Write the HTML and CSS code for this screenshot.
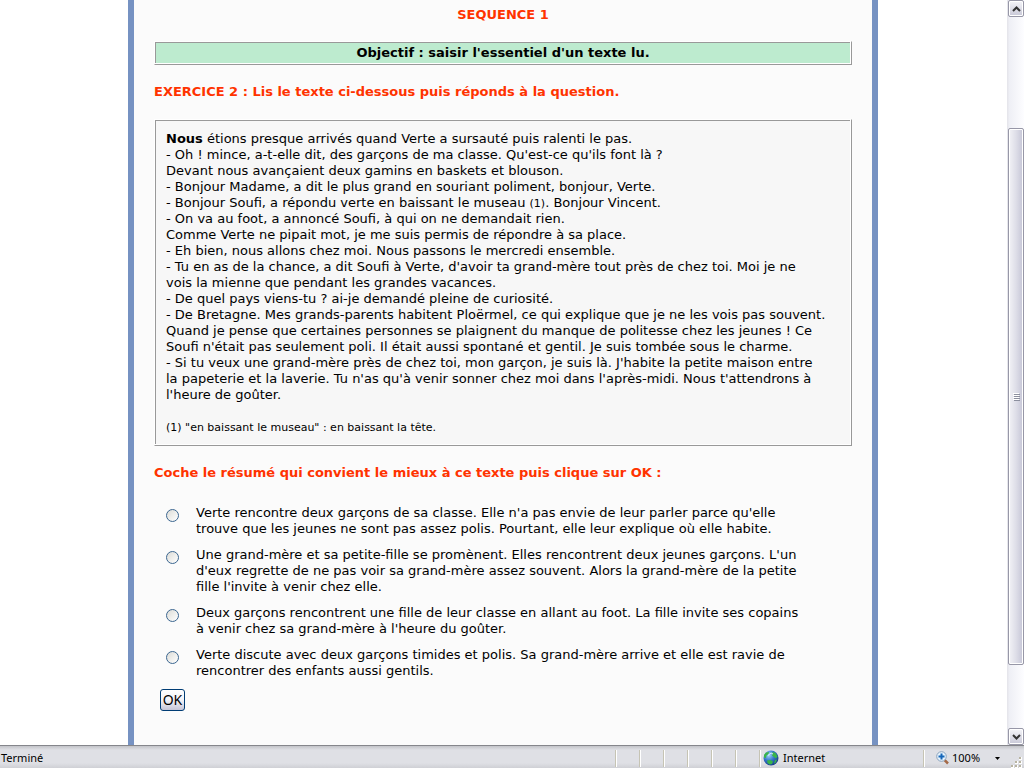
FILE: index.html
```html
<!DOCTYPE html>
<html lang="fr">
<head>
<meta charset="utf-8">
<title>Séquence 1</title>
<link rel="stylesheet" href="styles.css">
</head>
<body>
<div class="viewport">
  <div class="pane">
    <main class="page">
      <h1 class="title">SEQUENCE 1</h1>
      <p class="frame objective">Objectif : saisir l'essentiel d'un texte lu.</p>
      <h2 class="heading">EXERCICE 2 : Lis le texte ci-dessous puis réponds à la question.</h2>
      <article class="frame story">
        <p><strong>Nous</strong> étions presque arrivés quand Verte a sursauté puis ralenti le pas.</p>
        <p>- Oh ! mince, a-t-elle dit, des garçons de ma classe. Qu'est-ce qu'ils font là ?</p>
        <p>Devant nous avançaient deux gamins en baskets et blouson.</p>
        <p>- Bonjour Madame, a dit le plus grand en souriant poliment, bonjour, Verte.</p>
        <p>- Bonjour Soufi, a répondu verte en baissant le museau <small>(1)</small>. Bonjour Vincent.</p>
        <p>- On va au foot, a annoncé Soufi, à qui on ne demandait rien.</p>
        <p>Comme Verte ne pipait mot, je me suis permis de répondre à sa place.</p>
        <p>- Eh bien, nous allons chez moi. Nous passons le mercredi ensemble.</p>
        <p>- Tu en as de la chance, a dit Soufi à Verte, d'avoir ta grand-mère tout près de chez toi. Moi je ne<br>vois la mienne que pendant les grandes vacances.</p>
        <p>- De quel pays viens-tu ? ai-je demandé pleine de curiosité.</p>
        <p>- De Bretagne. Mes grands-parents habitent Ploërmel, ce qui explique que je ne les vois pas souvent.</p>
        <p>Quand je pense que certaines personnes se plaignent du manque de politesse chez les jeunes ! Ce Soufi n'était pas seulement poli. Il était aussi spontané et gentil. Je suis tombée sous le charme.</p>
        <p>- Si tu veux une grand-mère près de chez toi, mon garçon, je suis là. J'habite la petite maison entre<br>la papeterie et la laverie. Tu n'as qu'à venir sonner chez moi dans l'après-midi. Nous t'attendrons à<br>l'heure de goûter.</p>
        <p class="note">(1) "en baissant le museau" : en baissant la tête.</p>
      </article>
      <h2 class="heading">Coche le résumé qui convient le mieux à ce texte puis clique sur OK :</h2>
      <form class="quiz">
        <label class="option" for="r1"><input class="radio" type="radio" name="resume" id="r1"><span>Verte rencontre deux garçons de sa classe. Elle n'a pas envie de leur parler parce qu'elle trouve que les jeunes ne sont pas assez polis. Pourtant, elle leur explique où elle habite.</span></label>
        <label class="option" for="r2"><input class="radio" type="radio" name="resume" id="r2"><span>Une grand-mère et sa petite-fille se promènent. Elles rencontrent deux jeunes garçons. L'un d'eux regrette de ne pas voir sa grand-mère assez souvent. Alors la grand-mère de la petite fille l'invite à venir chez elle.</span></label>
        <label class="option" for="r3"><input class="radio" type="radio" name="resume" id="r3"><span>Deux garçons rencontrent une fille de leur classe en allant au foot. La fille invite ses copains à venir chez sa grand-mère à l'heure du goûter.</span></label>
        <label class="option" for="r4"><input class="radio" type="radio" name="resume" id="r4"><span>Verte discute avec deux garçons timides et polis. Sa grand-mère arrive et elle est ravie de rencontrer des enfants aussi gentils.</span></label>
        <button class="ok" type="button">OK</button>
      </form>
    </main>
  </div>
  <div class="scrollbar">
    <button class="arrow" type="button" aria-label="Défiler vers le haut"><svg width="9" height="6" viewBox="0 0 9 6"><path d="M1 5 4.500 1.500 8 5" fill="none" stroke="#333" stroke-width="2"/></svg></button>
    <div class="track"><div class="thumb"><svg width="7" height="8" viewBox="0 0 7 8" shape-rendering="crispEdges"><path d="M0 .5h6M0 2.500h6M0 4.500h6M0 6.500h6" stroke="#fff"/><path d="M1 1.500h6M1 3.500h6M1 5.500h6M1 7.500h6" stroke="#8c8f9e"/></svg></div></div>
    <button class="arrow" type="button" aria-label="Défiler vers le bas"><svg width="9" height="6" viewBox="0 0 9 6"><path d="M1 1 4.500 4.500 8 1" fill="none" stroke="#333" stroke-width="2"/></svg></button>
  </div>
</div>
<footer class="status">
  <span class="state">Terminé</span>
  <span class="cell"></span><span class="cell"></span><span class="cell"></span><span class="cell"></span><span class="cell"></span><span class="cell"></span>
  <span class="zone">
    <svg width="16" height="16" viewBox="0 0 16 16"><defs><radialGradient id="g" cx=".35" cy=".3" r=".75"><stop offset="0" stop-color="#a9d9fa"/><stop offset=".5" stop-color="#3577cc"/><stop offset="1" stop-color="#153a83"/></radialGradient></defs><circle cx="8" cy="8" r="7.500" fill="url(#g)"/><path d="M1 5 3 2.500 6 2 5.500 4 3.500 5.500 3 8 1 7.500zM9.500 2l3 1 2 3.500-1.500 2-2-1.500-2-1.500zM4 10.500l3.500-.5 2.500 1.500-1 2.500-2.500.5-2-1.500zM12 10l2-.5-1.500 3.500-1.500.5z" fill="#39b54a"/><path d="M5 5.500 8 3l2 1" fill="none" stroke="#d5f0fb"/></svg>
    Internet
  </span>
  <button class="zoom" type="button">
    <svg width="13" height="14" viewBox="0 0 13 14"><path d="M8.500 9 12 12.500" stroke="#a46a48" stroke-width="2.500"/><circle cx="5.500" cy="5.500" r="4.800" fill="#e6f3fd" stroke="#8aa3bd"/><path d="M5.500 2.500v6M2.500 5.500h6" stroke="#1767b8" stroke-width="2"/></svg>
    <span>100%</span>
    <svg class="caret" width="5" height="3" viewBox="0 0 5 3"><path d="M0 0h5L2.500 3z"/></svg>
  </button>
  <svg class="grip" width="12" height="12" viewBox="0 0 12 12" shape-rendering="crispEdges"><path d="M9 1h3v3H9zM5 5h3v3H5zM9 5h3v3H9zM1 9h3v3H1zM5 9h3v3H5zM9 9h3v3H9z" fill="#fff"/><path d="M9 1h2v2H9zM5 5h2v2H5zM9 5h2v2H9zM1 9h2v2H1zM5 9h2v2H5zM9 9h2v2H9z" fill="#b8b4a2"/></svg>
</footer>
</body>
</html>
```
FILE: styles.css
```css
* { box-sizing: border-box; }
body {
  margin: 0;
  height: 100vh;
  display: flex;
  flex-direction: column;
  background: #fff;
  color: #000;
  font: 13px/16px Verdana, "DejaVu Sans", sans-serif;
}
p, h1, h2 { margin: 0; font-size: 13px; line-height: 16px; }
button { font: inherit; color: inherit; padding: 0; }

.viewport { flex: 1; min-height: 0; display: flex; }
.pane { flex: 1; overflow: hidden; padding-right: 1px; }
.page {
  max-width: 750px;
  min-height: 100%;
  margin: 0 auto;
  padding: 7px 20px 32px;
  border: solid #7692c2;
  border-width: 0 6px;
  background: #fbfbfb;
}
.title, .heading { color: #ff3300; font-weight: bold; }
.title { text-align: center; margin-bottom: 18px; }
.frame {
  border: 1px solid;
  border-color: #fff #999 #999 #fff;
  box-shadow: inset -1px -1px #fff, inset 1px 1px #999;
  margin-bottom: 19px;
}
.objective {
  padding: 3px 8px;
  background: #bdebcf;
  font-weight: bold;
  text-align: center;
}
.heading { margin-bottom: 19px; }
.story { padding: 11px 8px 9px 11px; background: #f7f7f7; }
small { font-size: 11px; line-height: 1; }
.note { font-size: 11px; margin-top: 17px; }

.quiz { padding: 5px 48px 0 12px; }
.option { display: flex; gap: 17px; margin-bottom: 10px; }
.radio {
  appearance: none;
  flex: none;
  width: 13px;
  height: 13px;
  margin: 4px 0 0;
  border: 1px solid #3b6690;
  border-radius: 50%;
  background: linear-gradient(135deg, #dcdcd7, #fff);
}
.radio:checked { background: radial-gradient(#2aa12a 3px, #f4f4f2 4px); }
.ok {
  display: block;
  width: 25px;
  height: 22px;
  margin-left: -6px;
  border: 1px solid #003c74;
  border-radius: 3px;
  background: linear-gradient(#fff, #f3f3f8 50%, #c6c5d7);
  font: 14px/18px Tahoma, "Noto Sans", sans-serif;
}

.scrollbar {
  width: 17px;
  display: flex;
  flex-direction: column;
  padding-left: 1px;
  background: linear-gradient(90deg, #e6e6ec 1px, #eeeff5 2px, #fdfdff);
}
.arrow, .thumb {
  display: flex;
  align-items: center;
  justify-content: center;
  border: 1px solid #9797a7;
  border-radius: 2px;
  box-shadow: inset 0 0 0 1px #fff;
}
.arrow { height: 17px; background: linear-gradient(#f5f5f9, #c8c8d7); }
.track { flex: 1; display: flex; flex-direction: column; padding: 111px 0 63px; }
.thumb { flex: 1; background: linear-gradient(90deg, #f2f2f6, #dedee8 50%, #c5c5d6); }

.status {
  height: 23px;
  display: flex;
  align-items: center;
  border-top: 1px solid #85868b;
  background: linear-gradient(#c3c4c9, #dfe0e5 4px, #dfe0e5 17px, #cfd0d5);
  font: 11px/16px Tahoma, "Noto Sans", sans-serif;
}
.status > * { margin-top: 2px; }
.state { flex: 1; padding-left: 1px; }
.cell, .zone, .zoom {
  height: 17px;
  border: 0;
  border-left: 1px solid #c6c4b4;
  box-shadow: inset 1px 0 #fff;
}
.cell { width: 24px; }
.zone { width: 164px; display: flex; align-items: center; gap: 4px; padding-left: 3px; }
.zoom {
  width: 87px;
  display: flex;
  align-items: center;
  gap: 3px;
  padding-left: 12px;
  background: none;
}
.caret { margin-left: 12px; }
.grip { margin-right: 2px; align-self: flex-end; }
```
